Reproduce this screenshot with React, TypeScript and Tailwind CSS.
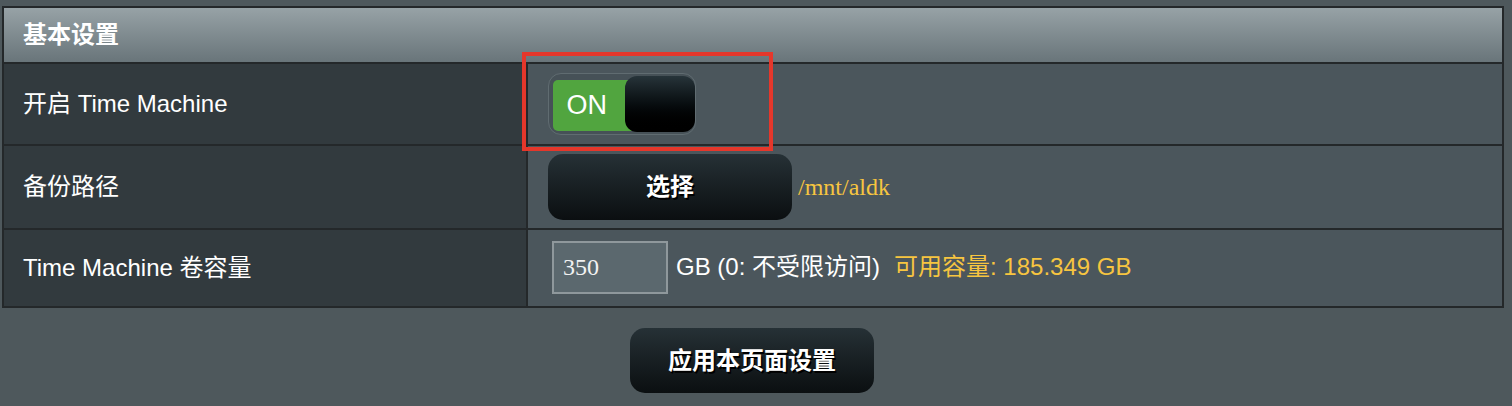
import React from "react";

const sans = "font-['Liberation_Sans','Noto_Sans_CJK_SC',sans-serif]";
const serif = "font-['Liberation_Serif','Noto_Sans_CJK_SC',serif]";

function Toggle() {
  return (
    <div className="relative w-[148px] h-[62px] rounded-[13px] border-[1.5px] border-[#606c71] bg-[#465157]">
      <div className="absolute left-[3.5px] top-[5.5px] w-[90px] h-[51px] rounded-[5px] bg-[#51a53f] flex items-center pl-[14px]">
        <span className="text-[27px] leading-none text-white">ON</span>
      </div>
      <div className="absolute right-[0.5px] top-[1.5px] w-[70px] h-[56px] rounded-[12px] bg-gradient-to-b from-[#27343a] to-[#000000]" />
    </div>
  );
}

function DarkButton({ label, className }: { label: string; className: string }) {
  return (
    <button
      className={`${className} rounded-[15px] bg-gradient-to-b from-[#263136] to-[#0b0f11] text-white font-bold text-[24px] [text-shadow:1.5px_1.5px_0_#000] flex items-center justify-center`}
    >
      {label}
    </button>
  );
}

export default function App() {
  return (
    <div className={`relative w-[1512px] h-[406px] bg-[#4e585c] pt-[6px] pl-[2px] ${sans} text-white`}>
      <div className="w-[1502px] border-2 border-[#24282a]">
        <div className="h-[54px] bg-gradient-to-b from-[#97a2a6] to-[#69757a] flex items-center pl-[19px]">
          <span className="text-[24px] font-bold leading-none">基本设置</span>
        </div>

        <div className="flex h-[82px] border-t-2 border-[#24282a]">
          <div className="w-[522px] bg-[#323a3e] flex items-center pl-[19px] text-[24px]">开启 Time Machine</div>
          <div className="flex-1 border-l-2 border-[#24282a] bg-[#4b565c] flex items-center pl-[20px]">
            <Toggle />
          </div>
        </div>

        <div className="flex h-[84px] border-t-2 border-[#24282a]">
          <div className="w-[522px] bg-[#323a3e] flex items-center pl-[19px] text-[24px]">备份路径</div>
          <div className="flex-1 border-l-2 border-[#24282a] bg-[#4b565c] flex items-center pl-[20px]">
            <DarkButton label="选择" className="w-[244px] h-[66px]" />
            <span className={`${serif} ml-[6px] text-[24px] text-[#f7c540]`}>/mnt/aldk</span>
          </div>
        </div>

        <div className="flex h-[78px] border-t-2 border-[#24282a]">
          <div className="w-[522px] bg-[#323a3e] flex items-center pl-[19px] text-[24px]">Time Machine 卷容量</div>
          <div className="flex-1 border-l-2 border-[#24282a] bg-[#4b565c] flex items-center pl-[24px] pb-[2px]">
            <div className={`w-[116px] h-[53px] border-2 border-[#8f989c] bg-[#5b686e] flex items-center pl-[9px] ${serif} text-[24px] text-[#f2f2f2]`}>
              350
            </div>
            <span className="ml-[8px] text-[24px]">GB (0: 不受限访问)</span>
            <span className="ml-[14px] text-[24px] text-[#f7c540]">可用容量: 185.349 GB</span>
          </div>
        </div>
      </div>

      <div className="w-[1500px] flex justify-center mt-[20px]">
        <DarkButton label="应用本页面设置" className="w-[244px] h-[65px]" />
      </div>

      <div className="absolute left-[522px] top-[52px] w-[251px] h-[99px] border-[4px] border-[#e5372b]" />
    </div>
  );
}
